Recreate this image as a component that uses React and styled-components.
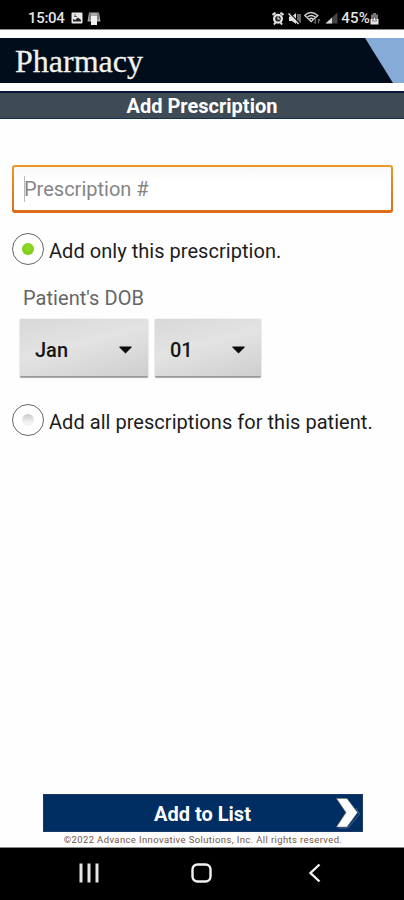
import React, { useState } from 'react';
import styled, { createGlobalStyle } from 'styled-components';

const GlobalStyle = createGlobalStyle`
  * {
    box-sizing: border-box;
  }
  body {
    margin: 0;
    background-color: #fff;
    font-family: Roboto, sans-serif;
  }
`;

const Screen = styled.div`
  width: 404px;
  height: 900px;
  display: flex;
  flex-direction: column;
  background-color: #fefefe;
  overflow: hidden;
`;

const StatusBar = styled.div`
  height: 30px;
  padding: 8px 25px 0 28px;
  flex-shrink: 0;
  display: flex;
  justify-content: space-between;
  background-color: #000;
  border-bottom: 1px solid #8a8a8a;
`;

const StatusGroup = styled.div`
  height: 20px;
  display: flex;
  align-items: center;
  gap: ${({ $gap }) => $gap}px;
`;

const StatusText = styled.span`
  color: #e4e4e4;
  font-size: 15px;
  font-weight: 500;
  line-height: 20px;
  letter-spacing: ${({ $spacing }) => $spacing}px;
`;

const Header = styled.header`
  height: 45px;
  margin-top: 8px;
  flex-shrink: 0;
  display: flex;
  justify-content: space-between;
  background-color: #010d1a;
`;

const Brand = styled.h1`
  margin: 0;
  padding-left: 15px;
  color: #f1f1ee;
  font-family: 'Liberation Serif', serif;
  font-size: 32px;
  font-weight: 400;
  line-height: 47px;
  -webkit-text-stroke: 0.3px #f1f1ee;
`;

const HeaderCorner = styled.div`
  width: 39px;
  background-color: #85abd6;
  clip-path: polygon(0 0, 100% 0, 100% 100%, 28px 100%);
`;

const TitleBar = styled.h2`
  height: 28px;
  margin: 8px 0 0;
  flex-shrink: 0;
  color: #fff;
  background-color: #3e4b55;
  border-top: 2px solid #061638;
  border-bottom: 1px solid #14304f;
  font-size: 20px;
  font-weight: 700;
  line-height: 27px;
  text-align: center;
`;

const Form = styled.main`
  padding: 46px 11px 0 12px;
  flex-grow: 1;
`;

const InputFrame = styled.div`
  height: 48px;
  padding: 2px 2px 3px;
  border-radius: 3px;
  background: linear-gradient(#ec9a27, #df6a18);
`;

const Input = styled.div`
  height: 43px;
  padding-left: 10px;
  display: flex;
  align-items: center;
  color: #858585;
  background: linear-gradient(#f8f8f8, #fff 30%);
  border-radius: 1px;
  font-size: 20px;
`;

const Caret = styled.span`
  width: 1px;
  height: 26px;
  margin-right: -1px;
  background-color: #bbb;
`;

const Option = styled.div`
  height: 34px;
  margin-top: ${({ $top }) => $top}px;
  display: flex;
  align-items: center;
  gap: 5px;
  color: #1c1c1c;
  font-size: 20px;
  letter-spacing: 0.04px;
  line-height: 34px;
  cursor: pointer;
`;

const OptionLabel = styled.span`
  padding-top: 4px;
  white-space: nowrap;
`;

const Radio = styled.span`
  width: 32px;
  height: 32px;
  display: flex;
  align-items: center;
  justify-content: center;
  border: 1.5px solid #666;
  border-radius: 50%;
  background-color: #fff;
`;

const RadioDot = styled.span`
  width: 12px;
  height: 12px;
  border-radius: 50%;
  background: ${({ $checked }) =>
    $checked
      ? 'radial-gradient(circle at 50% 40%, #8fdc2a, #77c60f)'
      : 'linear-gradient(#c9c9c9, #f3f3f3 70%)'};
`;

const FieldLabel = styled.div`
  margin: 20px 0 0 11px;
  color: #666;
  font-size: 20px;
  letter-spacing: 0.05px;
  line-height: 24px;
`;

const Selects = styled.div`
  margin: 9px 0 0 8px;
  display: flex;
  gap: 7px;
`;

const Select = styled.div`
  width: ${({ $width }) => $width}px;
  height: 58px;
  padding: 5px 16px 0 15px;
  display: flex;
  align-items: center;
  justify-content: space-between;
  color: #151515;
  background: linear-gradient(165deg, #d8d8d8, #e3e3e3 45%, #cecece);
  border-bottom: 1px solid #999;
  border-radius: 1px;
  box-shadow: 0 0 1px #888, 0 1px 1px #aaa;
  font-size: 20px;
  font-weight: 500;
`;

const Footer = styled.footer`
  height: 53px;
  flex-shrink: 0;
  display: flex;
  flex-direction: column;
  align-items: center;
`;

const SubmitButton = styled.button`
  width: 320px;
  height: 38px;
  margin-left: 1px;
  padding: 0;
  flex-shrink: 0;
  display: grid;
  grid-template-columns: 26px 1fr 26px;
  align-items: center;
  color: #fff;
  background-color: #002d62;
  border: 1px solid #1c3a66;
  font-family: inherit;
  font-size: 20px;
  font-weight: 700;
`;

const SubmitText = styled.span`
  grid-column: 2;
  padding-top: 2px;
`;

const Copyright = styled.div`
  margin-left: 2px;
  color: #755648;
  font-size: 9.5px;
  letter-spacing: 0.38px;
  line-height: 16px;
  white-space: nowrap;
`;

const NavBar = styled.nav`
  height: 53px;
  padding: 0 0 2px 32px;
  flex-shrink: 0;
  display: grid;
  grid-template-columns: repeat(3, 113px);
  align-items: center;
  justify-items: center;
  background-color: #000;
  border-top: 1px solid #8a8a8a;
`;

const ImageIcon = () => (
  <svg width="12" height="12" viewBox="0 0 12 12">
    <rect x="0.5" y="0.5" width="11" height="11" rx="1" fill="#e6e6e6" />
    <path d="M2 9.5V7l2 1 3-2.5L10 8v1.5z" fill="#222" />
    <path d="M3 3h2M3 4.5h3" stroke="#666" strokeWidth="1" />
  </svg>
);

const StoreIcon = () => (
  <svg width="14" height="13" viewBox="0 0 14 13">
    <path d="M2 0.5h10l1.500 9H10V5H4v4.500H0.500z" fill="#aaa" />
    <path d="M4 4h6v9H4z" fill="#f2f2f2" />
    <path d="M3 1v7M11 1v7" stroke="#333" strokeWidth="0.700" />
  </svg>
);

const AlarmIcon = () => (
  <svg width="12" height="13" viewBox="0 0 12 13">
    <path d="M0.500 3l3-2.300M11.500 3l-3-2.300M2 12.500l1.500-2M10 12.500l-1.500-2" stroke="#e6e6e6" strokeWidth="2" />
    <circle cx="6" cy="6.700" r="3.900" fill="#222" stroke="#e6e6e6" strokeWidth="2.200" />
    <path d="M6 4.500v2.500h2" stroke="#e6e6e6" strokeWidth="1.200" fill="none" />
  </svg>
);

const MuteIcon = () => (
  <svg width="13" height="13" viewBox="0 0 13 13">
    <path d="M1 4.500h3L8 1v11L4 9H1z" fill="#e0e0e0" />
    <path d="M10 2v9M12 2v9" stroke="#aaa" strokeWidth="1.200" />
    <path d="M1 0.500l11 11" stroke="#111" strokeWidth="1.200" />
    <path d="M0.500 1.500l10 10.500" stroke="#e0e0e0" strokeWidth="1.300" />
  </svg>
);

const WifiIcon = () => (
  <svg width="17" height="14" viewBox="0 0 17 14" fill="none">
    <path d="M0.700 4.500q6-6 13 0L7.200 10.500z" stroke="#ccc" strokeWidth="1.500" />
    <path d="M3.500 6q3.700-3 7.500 0M5.500 8q2-1.500 3.500 0" stroke="#ddd" strokeWidth="1.500" />
    <path d="M11.500 8v4.500M10 11l1.500 1.500M14.500 12.500V8M16 9.500L14.500 8" stroke="#666" strokeWidth="1.200" />
  </svg>
);

const SignalIcon = () => (
  <svg width="13" height="12" viewBox="0 0 13 12">
    <path d="M0.500 11.500L12.500 0.500v11z" fill="#444" />
    <path d="M0.500 11.500L7 5.500v6z" fill="#d8d8d8" />
  </svg>
);

const BatteryIcon = () => (
  <svg width="9" height="13" viewBox="0 0 9 13">
    <path d="M3 1h3v1.500h2V12H1V2.500h2z" fill="#777" />
    <path d="M0.500 7h8v5.500h-8z" fill="#e6e6e6" />
    <path d="M4.500 4.500l2 4.500h-4z" fill="#fff" stroke="#333" strokeWidth="0.600" />
  </svg>
);

const DropArrow = () => (
  <svg width="13" height="8" viewBox="0 0 13 8">
    <path d="M0.500 0.500h12v1L6.500 7.500L0.500 1.500z" fill="#0b0b0b" />
  </svg>
);

const SubmitArrow = () => (
  <svg width="24" height="32" viewBox="0 0 24 32">
    <path d="M3 31h9L23.500 17L20 11" fill="none" stroke="#44679a" strokeWidth="1" />
    <path d="M0.500 1.500h10.500L21.500 15.500L11 30H0.500L10 15.500z" fill="#fff" stroke="#777" strokeWidth="0.600" />
  </svg>
);

const RecentsIcon = () => (
  <svg width="20" height="20" viewBox="0 0 20 20">
    <path d="M2 0.500v19M10 0.500v19M18 0.500v19" stroke="#e4e4e4" strokeWidth="3" />
  </svg>
);

const HomeIcon = () => (
  <svg width="21" height="20" viewBox="0 0 21 20">
    <rect x="1.500" y="1.500" width="18" height="17" rx="5" fill="none" stroke="#f2f2f2" strokeWidth="2.400" />
  </svg>
);

const BackIcon = () => (
  <svg width="13" height="20" viewBox="0 0 13 20">
    <path d="M11.500 1.500L2.500 10l9 8.500" fill="none" stroke="#f2f2f2" strokeWidth="2.400" />
  </svg>
);

const RadioOption = ({ label, checked, onSelect, top }) => (
  <Option role="radio" aria-checked={checked} onClick={onSelect} $top={top}>
    <Radio>
      <RadioDot $checked={checked} />
    </Radio>
    <OptionLabel>{label}</OptionLabel>
  </Option>
);

const App = () => {
  const [mode, setMode] = useState('single');

  return (
    <>
      <GlobalStyle />
      <Screen>
        <StatusBar>
          <StatusGroup $gap={6}>
            <StatusText $spacing={-0.3}>15:04</StatusText>
            <StatusGroup $gap={4}>
              <ImageIcon />
              <StoreIcon />
            </StatusGroup>
          </StatusGroup>
          <StatusGroup $gap={3.5}>
            <AlarmIcon />
            <MuteIcon />
            <WifiIcon />
            <SignalIcon />
            <StatusGroup $gap={0}>
              <StatusText $spacing={0.2}>45%</StatusText>
              <BatteryIcon />
            </StatusGroup>
          </StatusGroup>
        </StatusBar>
        <Header>
          <Brand>Pharmacy</Brand>
          <HeaderCorner />
        </Header>
        <TitleBar>Add Prescription</TitleBar>
        <Form>
          <InputFrame>
            <Input>
              <Caret />
              Prescription #
            </Input>
          </InputFrame>
          <RadioOption
            label="Add only this prescription."
            checked={mode === 'single'}
            onSelect={() => setMode('single')}
            top={19}
          />
          <FieldLabel>Patient&apos;s DOB</FieldLabel>
          <Selects>
            <Select $width={128}>
              Jan
              <DropArrow />
            </Select>
            <Select $width={106}>
              01
              <DropArrow />
            </Select>
          </Selects>
          <RadioOption
            label="Add all prescriptions for this patient."
            checked={mode === 'all'}
            onSelect={() => setMode('all')}
            top={26}
          />
        </Form>
        <Footer>
          <SubmitButton type="button">
            <SubmitText>Add to List</SubmitText>
            <SubmitArrow />
          </SubmitButton>
          <Copyright>©2022 Advance Innovative Solutions, Inc. All rights reserved.</Copyright>
        </Footer>
        <NavBar>
          <RecentsIcon />
          <HomeIcon />
          <BackIcon />
        </NavBar>
      </Screen>
    </>
  );
};

export default App;
